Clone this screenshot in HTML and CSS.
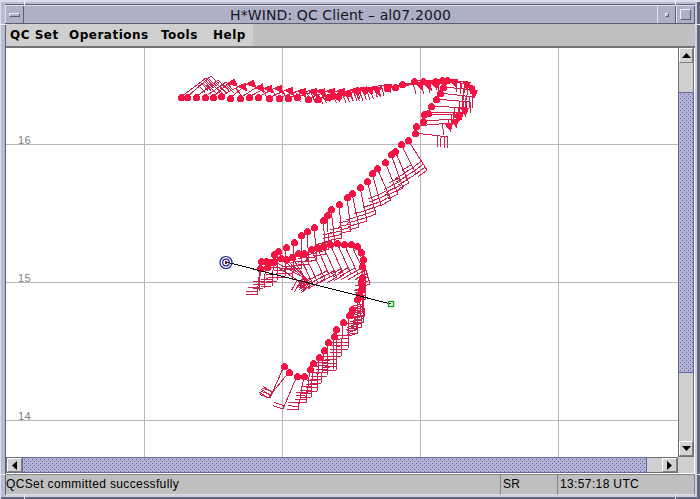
FILE: index.html
```html
<!DOCTYPE html>
<html lang="en">
<head>
  <meta charset="UTF-8">
  <title>H*WIND: QC Client – al07.2000</title>
  <link rel="stylesheet" href="styles.css">
</head>
<body>
  <div class="window">
    <!-- Title bar -->
    <header class="titlebar">
      <div class="title-btn"><span class="dash"></span></div>
      <h1>H*WIND: QC Client – al07.2000</h1>
      <div class="title-btn"><span class="dot"></span></div>
      <div class="title-btn"><span class="box"></span></div>
    </header>

    <!-- Menu -->
    <nav class="menubar">
      <ul>
        <li class="qcset">QC Set</li>
        <li class="operations">Operations</li>
        <li class="tools">Tools</li>
        <li class="help">Help</li>
      </ul>
    </nav>

    <!-- Map and scrollbars -->
    <main class="viewport">
      <svg class="map" viewBox="6 48 672 409" shape-rendering="crispEdges">
        <path class="grid" d="M144.5 48V457M282.5 48V457M420.5 48V457M558.5 48V457M6 144.5H678M6 282.5H678M6 420.5H678"/>
        <g class="label">
          <text x="18" y="144">16</text>
          <text x="18" y="282">15</text>
          <text x="18" y="420">14</text>
        </g>
        <g id="barbs"></g>
        <g class="track">
          <path class="range" d="M226 262L391 304"/>
          <circle class="mid" cx="271.500" cy="274" r="1.500"/>
          <circle class="center" cx="226" cy="262.500" r="6"/>
          <circle class="center" cx="226" cy="262.500" r="3.300"/>
          <rect class="core" x="225" y="261" width="2" height="3"/>
          <rect class="handle" x="388.500" y="301.500" width="5" height="5"/>
        </g>
      </svg>
      <div class="scroll vertical">
        <div class="arrow"><svg width="9" height="5"><path d="M0 5L4.500 0L9 5Z"/></svg></div>
        <div class="trough"><div class="thumb"></div></div>
        <div class="arrow"><svg width="9" height="5"><path d="M0 0H9L4.500 5Z"/></svg></div>
      </div>
      <div class="scroll horizontal">
        <div class="arrow"><svg width="5" height="9"><path d="M5 0V9L0 4.500Z"/></svg></div>
        <div class="trough"><div class="thumb"></div></div>
        <div class="arrow"><svg width="5" height="9"><path d="M0 0L5 4.500L0 9Z"/></svg></div>
      </div>
      <div class="corner"></div>
    </main>

    <!-- Status bar -->
    <footer class="status">
      <div class="message">QCSet committed successfully</div>
      <div class="user">SR</div>
      <div class="clock">13:57:18 UTC</div>
    </footer>
  </div>
  <script src="barbs.js"></script>
</body>
</html>
```
FILE: styles.css
```css
* {
  margin: 0;
  padding: 0;
  box-sizing: border-box;
}

body {
  font-family: "Liberation Sans", Arial, sans-serif;
  overflow: hidden;
}

.window {
  position: relative;
  isolation: isolate;
  width: 700px;
  height: 499px;
  display: grid;
  grid-template-rows: 19px 24px 426px 21px;
  padding: 5px 5px 4px 6px;
  background: #aeb0c6;
  box-shadow:
    inset 1px 2px 0 #dcdeec,
    inset -3px -2px 0 #62667c,
    inset 5px 4px 0 #b9bbcf,
    inset -5px -4px 0 #cfd1e2,
    inset 6px 5px 0 #5c5f73;
}

/* Notches of the resize corners, under the content */
.window::before,
.window::after {
  content: '';
  position: absolute;
  z-index: -1;
  border: 1px solid #eef0fa;
}
.window::before {
  top: -1px;
  bottom: -1px;
  left: 24px;
  right: 24px;
}
.window::after {
  left: -1px;
  right: -1px;
  top: 24px;
  bottom: 24px;
}

/* Title bar */
.titlebar {
  display: flex;
  margin: 0 0 0 -1px;
  background: #aeb0c6;
  border-top: 1px solid #dfe1ef;
  border-bottom: 1px solid #5c5f73;
}
.titlebar h1 {
  flex: 1;
  text-align: center;
  font: 14px/18px "DejaVu Sans", sans-serif;
  letter-spacing: 0.1px;
  color: #15151f;
  white-space: nowrap;
}
.title-btn {
  width: 19px;
  display: flex;
  align-items: center;
  justify-content: center;
  border-left: 1px solid #dfe1ef;
  border-right: 1px solid #5c5f73;
}
.title-btn span {
  border: 1px solid;
  border-color: #eceef8 #5c5f73 #5c5f73 #eceef8;
}
.dash {
  width: 11px;
  height: 4px;
}
.dot {
  width: 4px;
  height: 4px;
}
.box {
  width: 11px;
  height: 11px;
}

/* Menu */
.menubar {
  background: #c0c0c0;
  border-bottom: 2px solid #737373;
}
.menubar ul {
  list-style: none;
  display: flex;
  width: 247px;
  height: 22px;
  padding-left: 4px;
  background: #cfcfcf;
  font: bold 12px/22px "DejaVu Sans", sans-serif;
  letter-spacing: 0.5px;
  white-space: nowrap;
}
.qcset {
  width: 59px;
}
.operations {
  width: 92px;
}
.tools {
  width: 52px;
}

/* Map */
.viewport {
  display: grid;
  grid-template-columns: 672px 16px;
  grid-template-rows: 409px 16px;
  background: #fff;
}
.map {
  width: 672px;
  height: 409px;
  background: #fff;
}
.grid {
  stroke: #b8b8b8;
  fill: none;
}
.label {
  font-size: 11px;
  letter-spacing: 0.5px;
  fill: #808080;
}
.staff {
  stroke: #cf204c;
  stroke-width: 1;
  fill: none;
}
.flag,
.station {
  fill: #f81243;
}
.range {
  stroke: #000;
}
.center {
  stroke: #20209c;
  stroke-width: 1.2;
  fill: none;
  shape-rendering: auto;
}
.core {
  fill: #7c2020;
}
.handle {
  stroke: #19a319;
  stroke-width: 1.4;
  fill: none;
  shape-rendering: auto;
}

/* Scrollbars */
.scroll {
  display: flex;
  background: #cfcfcf;
  border: 1px solid #70707c;
}
.vertical {
  flex-direction: column;
  border-top: 0;
}
.trough {
  flex: 1;
}
.arrow {
  flex: 0 0 15px;
  display: flex;
  align-items: center;
  justify-content: center;
  background: #d2d2d2;
  border: 1px solid #fff;
  border-right-color: #808080;
  border-bottom-color: #808080;
}
.thumb {
  background-color: #b4b3d8;
  background-image:
    conic-gradient(at 1px 1px, transparent 75%, #5f5e8c 0),
    conic-gradient(at 1px 1px, transparent 75%, #5f5e8c 0);
  background-size: 4px 4px;
  background-position: 1px 1px, 3px 3px;
  border: 1px solid #6664a5;
}
.vertical .trough {
  padding-top: 29px;
}
.vertical .thumb {
  height: 281px;
  margin: 0 -1px;
}
.horizontal .thumb {
  width: 625px;
  height: 16px;
  margin-top: -1px;
}
.corner {
  background: #cfcfcf;
}

/* Status bar */
.status {
  display: grid;
  grid-template-columns: 495px 57px 1fr;
  background: #bfbfbf;
  border-top: 1px solid #858585;
  font-size: 12px;
  line-height: 19px;
  letter-spacing: 0.37px;
  white-space: nowrap;
}
.status div {
  padding-left: 2px;
  border-right: 1px solid #858585;
  border-bottom: 1px solid #dedede;
}
.status .message {
  padding-left: 0;
}
```
FILE: barbs.js
```javascript
// [x, y, staff dx, staff dy, full barbs, flags]
var stations = [
  // northern leg
  [181, 97, 25, -19, 4, 0], [187, 97, 24, -21, 4, 0], [196, 97, 22, -17, 4, 0],
  [205, 97, 21, -15, 4, 0], [213, 97, 19, -17, 1, 1], [221, 96, 22, -12, 1, 1],
  [230, 98, 21, -17, 0, 1], [240, 98, 20, -13, 0, 1], [249, 97, 20, -11, 1, 1],
  [258, 97, 21, -11, 1, 1], [269, 98, 21, -10, 1, 1], [279, 98, 24, -9, 1, 1],
  [288, 98, 26, -9, 2, 1], [297, 97, 25, -8, 2, 1], [308, 99, 24, -10, 3, 1],
  [318, 99, 24, -10, 2, 1], [328, 97, 28, -9, 3, 1], [332, 96, 32, -9, 3, 1],
  [338, 96, 32, -9, 3, 1], [348, 93, 30, -6, 3, 1], [357, 90, 32, -6, 3, 1],
  [387, 88, 34, -6, 1, 1], [395, 87, 34, -5, 1, 1], [402, 84, 34, -3, 1, 1],
  [414, 81, 24, -1, 1, 1], [423, 81, 22, -2, 1, 1], [435, 81, 20, -2, 0, 1],
  [442, 80, 26, 2, 2, 1], [447, 80, 26, 6, 2, 1], [443, 87, 32, 3, 2, 1],
  // northeast bend
  [440, 93, 33, 4, 4, 0], [436, 99, 34, 3, 4, 0], [431, 106, 35, 2, 2, 1],
  [428, 113, 33, -1, 1, 1], [424, 114, 35, 0, 1, 1], [423, 121, 33, -2, 1, 1],
  [416, 126, 34, -3, 1, 1], [415, 133, 33, 4, 4, 0],
  // diagonal leg
  [408, 140, 19, 30, 4, 0], [401, 144, 15, 30, 4, 0], [395, 151, 14, 32, 4, 0],
  [391, 154, 12, 34, 4, 0], [385, 162, 13, 32, 4, 0], [377, 168, 14, 32, 4, 0],
  [372, 173, 9, 32, 4, 0], [367, 181, 9, 33, 4, 0], [360, 187, 7, 34, 4, 0],
  [352, 193, 7, 34, 4, 0], [347, 197, 4, 34, 4, 0], [339, 204, 3, 34, 4, 0],
  [331, 209, 4, 34, 4, 0], [327, 215, 2, 34, 3, 0], [323, 220, 3, 34, 3, 0],
  [314, 227, 3, 33, 3, 0], [307, 231, 2, 33, 3, 0], [301, 235, 1, 33, 3, 0],
  [294, 242, -1, 31, 3, 0], [286, 247, -1, 30, 3, 0], [278, 251, -1, 30, 3, 0],
  [274, 254, -2, 32, 3, 0], [266, 261, -2, 27, 3, 0], [261, 261, -2, 30, 2, 0],
  [260, 268, -3, 27, 2, 0],
  // central arc
  [267, 267, 25, 2, 1, 0], [270, 262, 30, 20, 2, 0], [274, 261, 32, 18, 2, 0],
  [281, 258, 27, 24, 2, 0], [286, 259, 24, 23, 3, 0], [292, 257, 18, 29, 3, 0],
  [298, 253, 15, 31, 3, 0], [304, 253, 14, 30, 3, 0], [311, 249, 14, 30, 3, 0],
  [317, 247, 13, 30, 3, 0], [323, 246, 14, 31, 3, 0], [330, 244, 14, 31, 3, 0],
  [337, 243, 14, 31, 3, 0], [344, 244, 14, 30, 3, 0], [351, 244, 14, 30, 3, 0],
  [357, 246, 11, 31, 3, 0], [361, 252, 9, 32, 4, 0], [363, 259, 3, 32, 3, 0],
  // southern leg
  [362, 266, 4, 33, 4, 0], [362, 277, 2, 34, 3, 0], [361, 283, 4, 33, 4, 0],
  [361, 289, 3, 33, 4, 0], [359, 294, 3, 33, 4, 0], [357, 299, 1, 34, 4, 0],
  [352, 309, 6, 24, 3, 0], [349, 315, -1, 34, 5, 0], [343, 322, -2, 34, 5, 0],
  [336, 329, 0, 41, 5, 0], [334, 336, -1, 34, 5, 0], [328, 342, -1, 34, 5, 0],
  [324, 350, -3, 33, 4, 0], [319, 357, -2, 34, 4, 0], [313, 363, -2, 34, 4, 0],
  [310, 369, -4, 34, 4, 0], [304, 376, -6, 34, 3, 0], [297, 376, -14, 33, 2, 0],
  [289, 372, -21, 26, 3, 0], [284, 366, -14, 32, 3, 0]
];

var staffs = '';
var flags = '';
var dots = '';

stations.forEach(function (s) {
  var x = s[0], y = s[1], dx = s[2], dy = s[3];
  var len = Math.sqrt(dx * dx + dy * dy);
  var ux = dx / len, uy = dy / len;
  var tx = x + dx, ty = y + dy;
  staffs += 'M' + x + ' ' + y + 'L' + tx + ' ' + ty;

  for (var f = 0; f < s[5]; f++) {
    flags += 'M' + (tx + ux * 3) + ' ' + (ty + uy * 3)
      + 'L' + (tx - ux * 6) + ' ' + (ty - uy * 6)
      + 'L' + (tx - uy * 9) + ' ' + (ty + ux * 9) + 'Z';
    tx -= ux * 8;
    ty -= uy * 8;
  }
  // barbs stand on the clockwise side of the staff
  for (var b = 0; b < s[4]; b++) {
    staffs += 'M' + tx + ' ' + ty + 'L' + (tx - uy * 11 + ux) + ' ' + (ty + ux * 11 + uy);
    tx -= ux * 3.5;
    ty -= uy * 3.5;
  }
  dots += '<circle class="station" cx="' + (x + 0.5) + '" cy="' + (y + 0.5) + '" r="3.5"/>';
});

document.getElementById('barbs').innerHTML =
  '<path class="staff" d="' + staffs + '"/><path class="flag" d="' + flags + '"/>' + dots;
```
